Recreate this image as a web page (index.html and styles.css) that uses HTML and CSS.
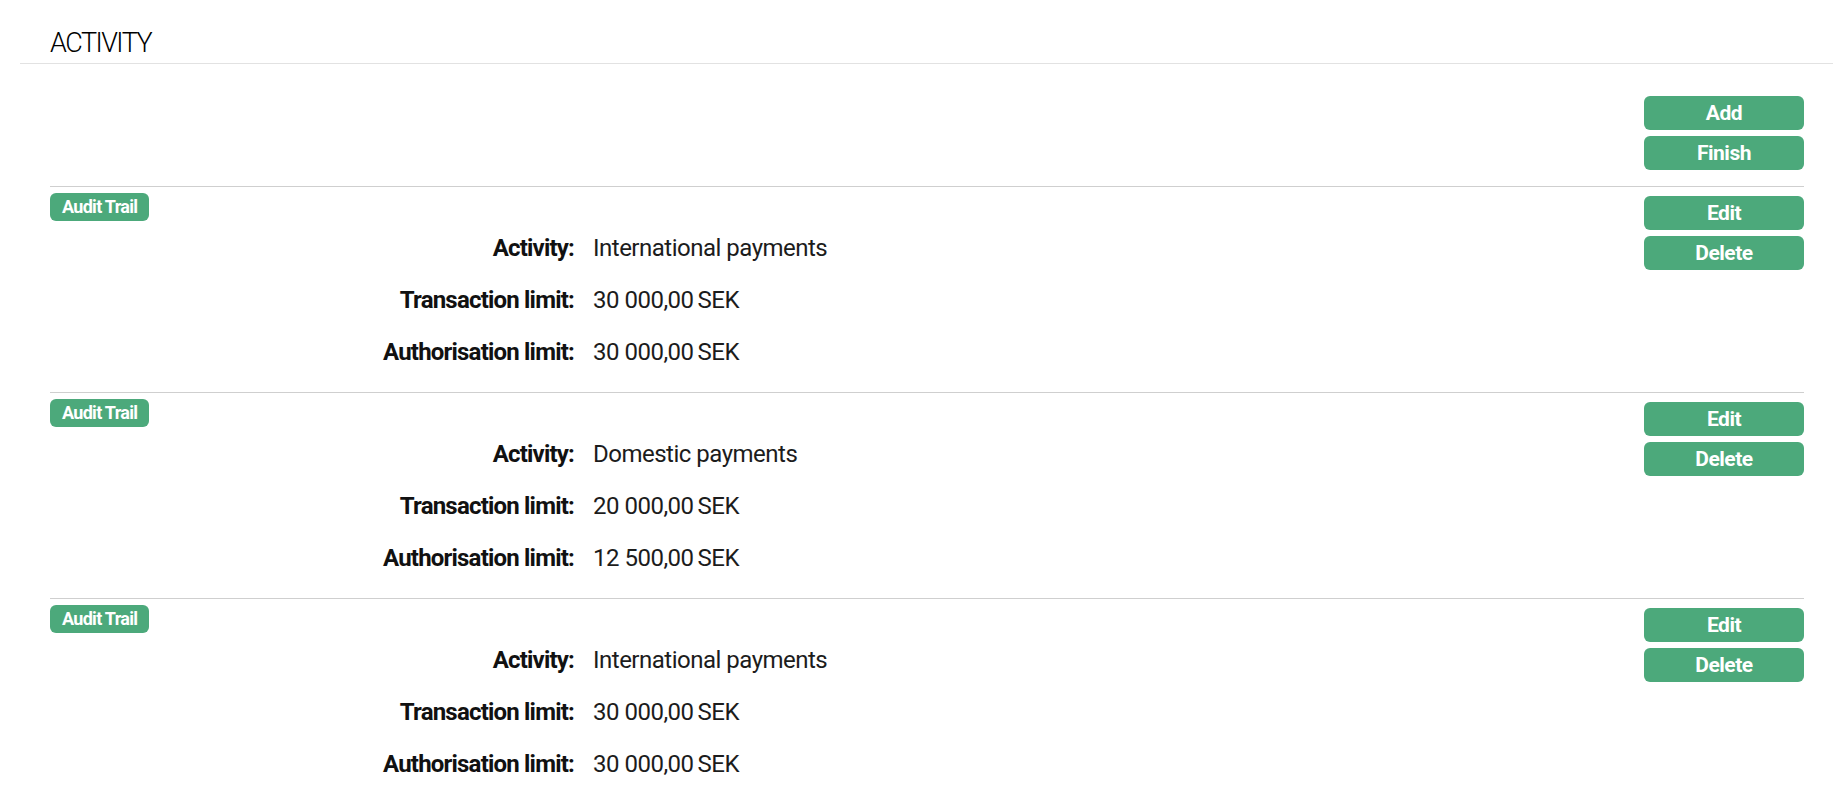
FILE: index.html
```html
<!DOCTYPE html>
<html lang="en">
<head>
<meta charset="utf-8">
<title>Activity</title>
<link rel="stylesheet" href="styles.css">
</head>
<body>
<div class="page">
  <h2 class="page-title">ACTIVITY</h2>
  <div class="content">
    <div class="toolbar">
      <div class="btn-col">
        <button class="btn" type="button">Add</button>
        <button class="btn" type="button">Finish</button>
      </div>
    </div>

    <section class="entry">
      <div class="entry-main">
        <span class="badge">Audit Trail</span>
        <dl class="fields">
          <dt>Activity:</dt><dd>International payments</dd>
          <dt>Transaction limit:</dt><dd>30 000,00<span class="cur">SEK</span></dd>
          <dt>Authorisation limit:</dt><dd>30 000,00<span class="cur">SEK</span></dd>
        </dl>
      </div>
      <div class="btn-col entry-actions">
        <button class="btn" type="button">Edit</button>
        <button class="btn" type="button">Delete</button>
      </div>
    </section>

    <section class="entry">
      <div class="entry-main">
        <span class="badge">Audit Trail</span>
        <dl class="fields">
          <dt>Activity:</dt><dd>Domestic payments</dd>
          <dt>Transaction limit:</dt><dd>20 000,00<span class="cur">SEK</span></dd>
          <dt>Authorisation limit:</dt><dd>12 500,00<span class="cur">SEK</span></dd>
        </dl>
      </div>
      <div class="btn-col entry-actions">
        <button class="btn" type="button">Edit</button>
        <button class="btn" type="button">Delete</button>
      </div>
    </section>

    <section class="entry">
      <div class="entry-main">
        <span class="badge">Audit Trail</span>
        <dl class="fields">
          <dt>Activity:</dt><dd>International payments</dd>
          <dt>Transaction limit:</dt><dd>30 000,00<span class="cur">SEK</span></dd>
          <dt>Authorisation limit:</dt><dd>30 000,00<span class="cur">SEK</span></dd>
        </dl>
      </div>
      <div class="btn-col entry-actions">
        <button class="btn" type="button">Edit</button>
        <button class="btn" type="button">Delete</button>
      </div>
    </section>
  </div>
</div>
</body>
</html>
```

FILE: styles.css
```css
html, body {
  margin: 0;
  padding: 0;
  background: #ffffff;
}

body {
  font-family: Roboto, "Liberation Sans", sans-serif;
  color: #1a1a1a;
}

.page {
  padding-left: 20px;
}

.page-title {
  margin: 0;
  padding: 27px 0 4px 30px;
  font-size: 27px;
  line-height: 32px;
  font-weight: 300;
  letter-spacing: -1.5px;
  color: #000;
  border-bottom: 1px solid #e2e2e2;
}

.content {
  margin: 0 29px 0 30px;
}

.toolbar {
  display: flex;
  justify-content: flex-end;
  padding: 32px 0 16px;
}

.btn-col {
  display: flex;
  flex-direction: column;
  gap: 6px;
  width: 160px;
  flex: none;
}

.btn {
  display: block;
  width: 100%;
  height: 34px;
  padding: 0;
  border: none;
  border-radius: 6px;
  background: #4ca97b;
  color: #ffffff;
  font-family: Roboto, "Liberation Sans", sans-serif;
  font-size: 21px;
  font-weight: 700;
  letter-spacing: -0.5px;
  line-height: 34px;
  text-align: center;
}

.entry {
  display: flex;
  border-top: 1px solid #cfcfcf;
  padding-bottom: 14px;
}

.entry-main {
  flex: 1;
  display: flex;
  flex-direction: column;
  align-items: flex-start;
}

.entry-actions {
  padding-top: 9px;
}

.badge {
  display: block;
  margin-top: 6px;
  height: 28px;
  padding: 0 12px;
  border-radius: 6px;
  background: #4ca97b;
  color: #ffffff;
  font-size: 18px;
  font-weight: 700;
  letter-spacing: -0.7px;
  line-height: 28px;
}

.fields {
  align-self: stretch;
  display: grid;
  grid-template-columns: 524px 1fr;
  grid-auto-rows: 52px;
  column-gap: 19px;
  margin: 1px 0 0;
}

.fields dt {
  text-align: right;
  font-size: 24px;
  font-weight: 700;
  line-height: 52px;
  letter-spacing: -0.8px;
  color: #111;
}

.fields dd {
  margin: 0;
  font-size: 24px;
  font-weight: 400;
  line-height: 52px;
  letter-spacing: -0.5px;
  color: #1c1c1c;
}

.cur {
  margin-left: 4px;
}
```
